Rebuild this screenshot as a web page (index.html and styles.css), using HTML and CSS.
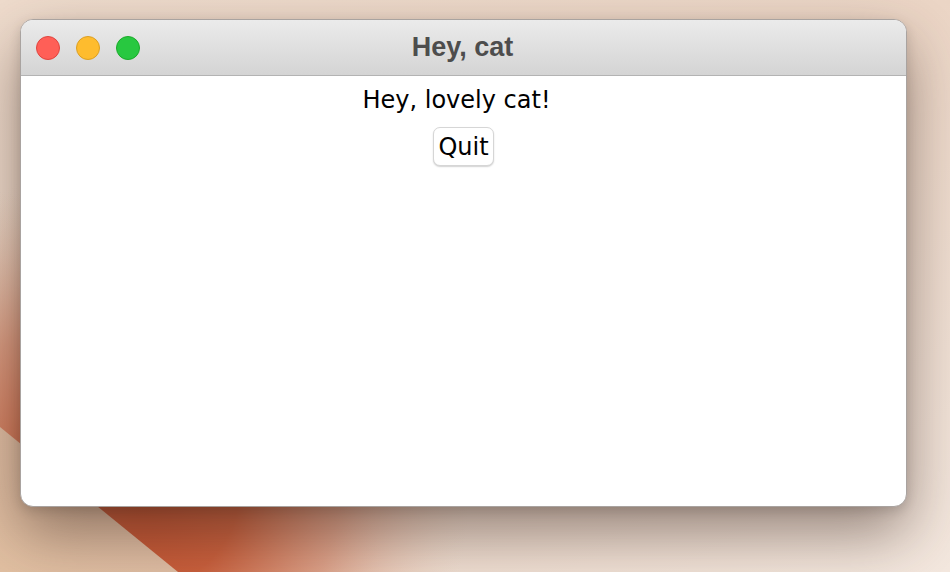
FILE: index.html
```html
<!DOCTYPE html>
<html>
<head>
<meta charset="utf-8">
<link rel="stylesheet" href="styles.css">
</head>
<body>
<div class="desktop">
  <svg class="wallpaper" width="950" height="572" viewBox="0 0 950 572" xmlns="http://www.w3.org/2000/svg">
    <defs>
      <linearGradient id="base" x1="0" y1="0" x2="1" y2="1">
        <stop offset="0" stop-color="#efdccd"/>
        <stop offset="0.5" stop-color="#ecd6c6"/>
        <stop offset="1" stop-color="#f4e8df"/>
      </linearGradient>
      <radialGradient id="tan" cx="0" cy="572" r="380" gradientUnits="userSpaceOnUse">
        <stop offset="0" stop-color="#e2c0a2"/>
        <stop offset="0.6" stop-color="#dcb79c" stop-opacity="0.8"/>
        <stop offset="1" stop-color="#e6cdb9" stop-opacity="0"/>
      </radialGradient>
      <radialGradient id="orange" cx="140" cy="490" r="330" gradientUnits="userSpaceOnUse">
        <stop offset="0" stop-color="#c2502e"/>
        <stop offset="0.3" stop-color="#c95f3c"/>
        <stop offset="0.6" stop-color="#d88f74" stop-opacity="0.75"/>
        <stop offset="1" stop-color="#e8cbb8" stop-opacity="0"/>
      </radialGradient>
    </defs>
    <rect width="950" height="572" fill="url(#base)"/>
    <rect width="950" height="572" fill="url(#tan)"/>
    <polygon points="0,100 0,427 178,572 760,572 760,100" fill="url(#orange)"/>
  </svg>
  <div class="window">
    <div class="titlebar">
      <div class="lights">
        <span class="light red"></span>
        <span class="light yellow"></span>
        <span class="light green"></span>
      </div>
      <div class="title">Hey, cat</div>
    </div>
    <div class="content">
      <div class="greeting">Hey, lovely cat!</div>
      <button class="quit">Quit</button>
    </div>
  </div>
</div>
</body>
</html>
```

FILE: styles.css
```css
html, body {
  margin: 0;
  padding: 0;
  width: 950px;
  height: 572px;
  overflow: hidden;
}

.desktop {
  position: relative;
  width: 950px;
  height: 572px;
  box-sizing: border-box;
  padding: 19px 0 0 20px;
}

.wallpaper {
  position: absolute;
  left: 0;
  top: 0;
  display: block;
}

.window {
  position: relative;
  width: 887px;
  height: 488px;
  box-sizing: border-box;
  border: 1px solid #a9a3a0;
  border-radius: 13px;
  background: #ffffff;
  overflow: hidden;
  box-shadow: 0 26px 60px rgba(60, 40, 32, 0.5), 0 4px 12px rgba(0, 0, 0, 0.14);
  display: flex;
  flex-direction: column;
}

.titlebar {
  position: relative;
  height: 56px;
  flex: none;
  box-sizing: border-box;
  background: linear-gradient(#ebebeb, #d4d4d4);
  border-bottom: 1px solid #b3b3b3;
  display: flex;
  align-items: center;
  justify-content: center;
}

.lights {
  position: absolute;
  left: 15px;
  top: 16px;
  display: flex;
  gap: 16px;
}

.light {
  width: 24px;
  height: 24px;
  box-sizing: border-box;
  border-radius: 50%;
  border: 1px solid;
}

.red { background: #ff5f57; border-color: #e0443e; }
.yellow { background: #febc2e; border-color: #dc9f22; }
.green { background: #28c840; border-color: #1aab29; }

.title {
  font-family: "Liberation Sans", Arial, sans-serif;
  font-weight: bold;
  font-size: 27px;
  color: #4d4d4d;
  margin-left: -2px;
}

.content {
  flex: 1;
  display: flex;
  flex-direction: column;
  align-items: center;
  padding-top: 10px;
}

.greeting {
  font-family: "DejaVu Sans", sans-serif;
  font-size: 24px;
  line-height: 28px;
  color: #000;
  margin-left: -14px;
}

.quit {
  margin-top: 13px;
  height: 39px;
  padding: 0 4px;
  font-family: "DejaVu Sans", sans-serif;
  font-size: 24px;
  color: #000;
  background: #fff;
  border: 1px solid #d6d6d6;
  border-radius: 7px;
  box-shadow: 0 1px 1.5px rgba(0, 0, 0, 0.18);
}
```
